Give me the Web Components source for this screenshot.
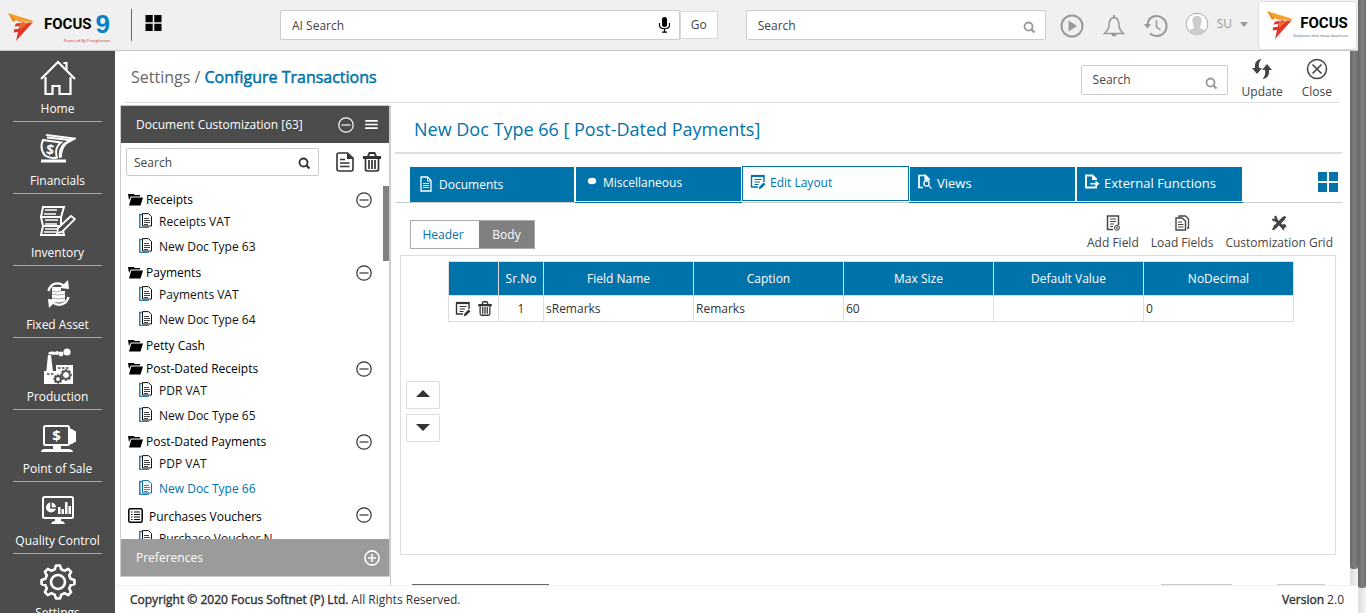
<!DOCTYPE html>
<html lang="en">
<head>
<meta charset="utf-8">
<title>Configure Transactions</title>
<style>
  html, body { margin: 0; height: 100%; overflow: hidden; }
  body { font: 12px/18px "Open Sans", sans-serif; color: #333; background: #fff; --blue: #0073aa; --dark: #4c4c4c; --line: #ccc; }
</style>
</head>
<body>
<app-shell></app-shell>
<script>
const gearPath = (cx, cy, r, R, n) => {
  let d = '';
  for (let i = 0; i < n; i++) {
    const a = i * 2 * Math.PI / n;
    [[-.62, r], [-.3, R], [.3, R], [.62, r]].forEach(([k, q], j) => {
      const t = a + k * Math.PI / n * 1.05;
      d += (i + j ? 'L' : 'M') + (cx + q * Math.sin(t)).toFixed(2) + ' ' + (cy - q * Math.cos(t)).toFixed(2);
    });
  }
  return d + 'Z';
};
const S = 'fill="none" stroke="currentColor"';
const ICONS = {
  home: ['36 36', `<g ${S} stroke-width="2.2"><path d="M1 19 18 2l17 17"/><path d="M25 4V3h2v7M6 17v17h7v-8h7v8h11V17" transform="translate(-.5 0)"/></g>`],
  money: ['36 36', `<g ${S} stroke-width="1.800"><path d="M6 3l29 3.500-9 5c-4 4-5 8-5 14"/><path d="M7 5.500l23 2.500-6 4c-4 4-5 8-4 14"/><path d="M3 8l18 2.500c-5 4-6 9-4 15-4 1-9 0-12-2-5-6-4-11-2-15.500z" stroke-width="2"/></g><path d="M1 29h25" stroke="currentColor" stroke-width="3"/><text x="6" y="22.500" font-size="14" font-weight="700" fill="currentColor" font-family="Open Sans" transform="rotate(8 10 18)">$</text>`],
  inventory: ['36 36', `<g ${S} stroke-width="2"><path d="M3 3h21l-3 10H1zM1 13h20v9H3zM3 22h19l2 9H1z"/><path d="M5 6h12M4 10h12M5 16h13M5 20h12M5 25h14M4 28h12" stroke-width="1.4"/></g><path d="M31 12l4 3-13 13-5 1 1-5z" fill="#4c4c4c" stroke="currentColor" stroke-width="1.8"/>`],
  asset: ['36 36', `<path d="M12 11h9v4h4v10q-6 3-13 0z" fill="currentColor"/><path d="M12 15q4 2 9 0M12 18q6 2 13 0M12 22q6 2 13 0" stroke="#aaa" fill="none"/><g ${S} stroke-width="2.400"><path d="M8.500 15c2-8 11-10 16-4.500M28.500 21c-2 8-11 10-16 5"/></g><path d="M20 12l9 1-1-9zM17 24l-9-1 1 9z" fill="currentColor"/>`],
  factory: ['36 36', `<g fill="currentColor"><path d="M8 7h3l2 17 1 12H5z"/><path d="M4 23h12v-6h17v19H4z"/><circle cx="27" cy="4" r="3.6"/><circle cx="21" cy="6" r="2.4"/><circle cx="17" cy="5" r="2"/><path d="M8 6c1-3 5-3 8-1l-1 2z"/></g><g stroke="#4c4c4c" stroke-dasharray="2.5 1.5" stroke-width="1.5"><path d="M18 20h12M7 26h8"/></g><g fill="none" stroke="#4c4c4c" stroke-width="1.5"><path d="${gearPath(26, 27, 3.6, 5, 8)}"/><path d="${gearPath(18, 31, 2.6, 3.8, 8)}"/></g>`],
  pos: ['36 36', `<rect x="4" y="6" width="25" height="19" rx="1.500" ${S} stroke-width="2"/><path d="M29 8l5 2v13l-5 2zM34 11h2.500v11H34zM13 26h8v3h8q4 1 4 3H1q0-3 4-3h8z" fill="currentColor"/><text x="16.500" y="21" text-anchor="middle" font-size="15" font-weight="700" fill="currentColor" font-family="Open Sans">$</text>`],
  quality: ['36 36', `<rect x="3" y="5" width="30" height="21" rx="1.500" ${S} stroke-width="2"/><path d="M15 27h6v2q3 0 4 3H11q1-3 4-3z" fill="currentColor"/><circle cx="11" cy="15.500" r="5" fill="currentColor"/><path d="M11 10v6h6" stroke="#4c4c4c" stroke-width="1.500" fill="none"/><path d="M18 22v-7h2.500v7zM21.500 22v-5H24v5zM25 22V10h2.500v12zM28.500 22v-8H31v8z" fill="currentColor"/>`],
  gear: ['36 36', `<g ${S} stroke-width="2.600" stroke-linejoin="round"><path d="${gearPath(18, 18, 13, 16.6, 8)}"/><circle cx="18" cy="18" r="7"/></g>`],
  grid: ['20 20', `<path d="M0 0h9v9H0zM11 0h9v9h-9zM0 11h9v9H0zM11 11h9v9h-9z" fill="currentColor"/>`],
  mic: ['12 16', `<rect x="4" y="0" width="5" height="10" rx="2.500" fill="currentColor"/><path d="M1.500 6v2c0 5 10 5 10 0V6M6.500 12v3M4 15.200h5" ${S} stroke-width="1.200"/>`],
  search: ['14 14', `<circle cx="6.500" cy="6.500" r="4" ${S} stroke-width="1.800"/><path d="M9.500 9.500l3 3" ${S} stroke-width="2.200"/>`],
  play: ['24 24', `<circle cx="12" cy="12" r="10.500" ${S} stroke-width="2"/><path d="M8.500 6.500l8.500 5.500-8.500 5.500z" fill="currentColor"/>`],
  bell: ['24 24', `<path d="M12 3.500C7 4 7 9 7 12c0 3-2 5-4.500 7.500h19C19 17 17 15 17 12c0-3 0-8-5-8.500z" ${S} stroke-width="1.600"/><path d="M9.500 20a2.500 2.500 0 0 0 5 0zM11 1h2v3h-2z" fill="currentColor"/>`],
  history: ['24 24', `<path d="M5 5.500A10 10 0 1 1 6 19.500" ${S} stroke-width="2"/><path d="M0 10h7l-3.500 4.500z" fill="currentColor"/><path d="M3.500 11Q3.500 8 5.500 5" ${S} stroke-width="2"/><path d="M12.500 6v7l4 3" ${S} stroke-width="1.500"/>`],
  avatar: ['24 24', `<circle cx="12" cy="12" r="10.800" fill="#fff" stroke="#aaa"/><path d="M12 4c4 0 5 3 4.500 6S15 14 15 15.500s5 1.500 5 3.500a10 10 0 0 1-16 0c0-2 5-2 5-3.500S8 13 7.500 10 8 4 12 4z" fill="#ccc"/>`],
  caret: ['10 6', `<path d="M0 0h10L5 6z" fill="currentColor"/>`],
  up: ['14 8', `<path d="M0 7h14L7 0z" fill="currentColor"/>`],
  down: ['14 8', `<path d="M0 1h14L7 8z" fill="currentColor"/>`],
  refresh: ['22 22', `<path d="M10.500 1C5.500 1.500 3.500 5 4 10H1l5 6 5-6H8c-.5-4 0-6.500 2.500-9zM11.500 21c5-.5 7-4 6.500-9h3l-5-6-5 6h3c.5 4 0 6.500-2.500 9z" fill="currentColor"/>`],
  close: ['22 22', `<circle cx="11" cy="11" r="9.500" ${S} stroke-width="1.500"/><path d="M6.500 6.500l9 9M15.500 6.500l-9 9" ${S} stroke-width="1.600"/>`],
  minus: ['16 16', `<circle cx="8" cy="8" r="7.200" ${S} stroke-width="1.200"/><path d="M3.500 8h9" ${S} stroke-width="1.200"/>`],
  plus: ['16 16', `<circle cx="8" cy="8" r="7.100" ${S} stroke-width="1.600"/><path d="M4 8h8M8 4v8" ${S} stroke-width="1.600"/>`],
  menu: ['14 10', `<path d="M0 1h14M0 5h14M0 9h14" ${S} stroke-width="1.800"/>`],
  note: ['18 20', `<path d="M3 1h8.500L17 6v11q0 2-2 2H3q-2 0-2-2V3q0-2 2-2z" ${S} stroke-width="1.600"/><path d="M11 1l6 6h-6z" fill="currentColor"/><path d="M4 7.500h5M4 11h9.500M4 14.500h9.500" ${S} stroke-width="1.500"/>`],
  trash: ['18 20', `<path d="M5 4l1.500-3h5L13 4" ${S} stroke-width="1.800"/><path d="M0 4h18v3H0z" fill="currentColor"/><path d="M2.500 6v11q0 2 2 2h9q2 0 2-2V6M6 8v9M9 8v9M12 8v9" ${S} stroke-width="1.700"/>`],
  folder: ['15 12', `<path d="M0 0h5.500L7 1h5v1.500H2.800L1 6zM3.300 3.500H15L12.500 11.500H1z" fill="currentColor"/>`],
  docs: ['13 15', `<path d="M3 1.500H.8v13h9" fill="none" stroke="#2d7fae" stroke-width="1.500"/><path d="M3.500.6h6l3 3V13h-9z" ${S}/><path d="M5 5.500h5M5 7.500h6M5 9.500h6M5 11.500h4" ${S} stroke-width=".8"/>`],
  list: ['15 15', `<rect x=".8" y=".8" width="13.400" height="13.400" rx="1.500" ${S} stroke-width="1.500"/><path d="M3 4h1.500M3 6.500h1.500M3 9h1.500M3 11.500h1.500M6 4h6M6 6.500h6M6 9h6M6 11.500h6" ${S} stroke-width="1.100"/>`],
  page: ['12 16', `<path d="M1 1h6.500L11 4.500V15H1z" ${S} stroke-width="1.300"/><path d="M7.500 1v4H11M3 7.500h6M3 9.500h6M3 11.500h6" ${S}/>`],
  dot: ['12 16', `<ellipse cx="7" cy="7" rx="4.200" ry="3.300" fill="currentColor"/>`],
  edit: ['16 16', `<path d="M14 8V2H1.500v11H8" ${S} stroke-width="1.400" stroke-linejoin="round"/><path d="M1 2h13.500" ${S} stroke-width="2.200"/><path d="M4.500 5.500h7M4.500 8h5.500M4.500 10.500h4" ${S} stroke-width="1.100"/><path d="M13.500 8.500l2 1.800-4.300 4.200-2.400.8.500-2.600z" fill="currentColor"/>`],
  view: ['16 16', `<path d="M12 6V5L8.500 1.500H2v12h4" ${S} stroke-width="1.700"/><circle cx="9.500" cy="9.500" r="2.600" ${S} stroke-width="1.300"/><path d="M8 1v5h4zM11.200 11.200l3.500 3.500" fill="currentColor" stroke="currentColor" stroke-width="1.200"/>`],
  external: ['16 16', `<path d="M12 6V5L8.500 1.500H2v12h10v-2" ${S} stroke-width="1.900"/><path d="M8 1v5h4z" fill="currentColor"/><path d="M6.500 9h5V6.500l4 3.300-4 3.200v-2.500h-5z" fill="currentColor"/>`],
  addfield: ['16 16', `<path d="M13.500 10V1H2.500v13.500H8" ${S} stroke-width="1.500"/><path d="M5 4h6M5 6.500h6M5 9h4M5 11.500h3" ${S} stroke-width="1.200"/><circle cx="12" cy="12.800" r="2.500" ${S}/><path d="M12 11.300v3M10.500 12.800h3" ${S} stroke-width=".8"/>`],
  loadfields: ['16 16', `<path d="M5 2.500V1h6.500l3 3v9H13" ${S} stroke-width="1.300"/><path d="M2 3h6l3.500 3v9H2z" ${S} stroke-width="1.400"/><path d="M4 7h4M4 9.500h5.500M4 12h5.500" ${S} stroke-width="1.200"/>`],
  tools: ['16 16', `<path d="M4.500 4.500l8.500 9" ${S} stroke-width="3"/><path d="M1 3.500l2 .5.800-1L3 .8C5.500.3 7 2.500 6.200 5L5 6.500C2.500 7 .8 5.500 1 3.500zM10.500 11l2-2q3 0 3 3.500l-2-.5-.8 1 .8 2.200q-3 0-3-4.200z" fill="currentColor"/><path d="M13 3L3.500 12.500" ${S} stroke-width="3.400"/><path d="M13.500.8l1.800 1.800-2.300 2-1.800-1.800zM3.500 10.500l2 2L3 15l-2.300-.3z" fill="currentColor"/>`],
  mark: ['26 28', `<path d="M0 0l26 8-6 2-3-1.500-6 .5-3-2-2 1.500z" fill="#f6a02d"/><path d="M0 0l8 7-3 2z" fill="#e98b20"/><path d="M8 10.500l4-.5 4-1 2 1.500L25 9 8 28l2-9-4.500.5 1-3.500h4l1-3-5 .5z" fill="#e3352b"/><path d="M12 10.500l4-1 3 1.500-7 6z" fill="#f26a2c"/>`],
};

function define(name, html, setup) {
  const tpl = document.createElement('template');
  tpl.innerHTML = '<style>*{box-sizing:border-box}button,input{font:inherit;color:inherit}button{padding:0;border:0;background:none}a{color:inherit;text-decoration:none}</style>' + html;
  customElements.define(name, class extends HTMLElement {
    connectedCallback() {
      if (this.shadowRoot) return;
      this.attachShadow({ mode: 'open' }).append(tpl.content.cloneNode(true));
      if (setup) setup.call(this, this.shadowRoot);
    }
  });
}

define('ui-icon', `<style>:host{display:block;flex:none;width:16px;height:16px}svg{display:block;width:100%;height:100%}</style>`, function (root) {
  const [box, art] = ICONS[this.getAttribute('name')];
  root.innerHTML += `<svg viewBox="0 0 ${box}" aria-hidden="true">${art}</svg>`;
});

define('search-box', `<style>
  :host{display:flex;align-items:center;height:30px;background:#fff;border:1px solid #ccc;border-radius:2px;padding:0 9px 0 var(--inset,11px);box-sizing:border-box;color:#444}
  input{flex:1;min-width:0;border:0;outline:0;padding:0;background:none;height:20px}
  input::placeholder{color:#444;opacity:1}
  ui-icon{width:14px;height:14px;color:var(--glyph,#999);margin-top:var(--drop,3px)}
  ui-icon[name=mic]{width:12px;height:16px;color:#000;margin-top:0}
</style><input type="text">`, function (root) {
  const input = root.querySelector('input');
  input.placeholder = this.getAttribute('label');
  input.setAttribute('aria-label', this.getAttribute('label'));
  input.insertAdjacentHTML('afterend', `<ui-icon name="${this.getAttribute('icon') || 'search'}"></ui-icon>`);
});

define('brand-logo', `<style>
  :host{display:flex;align-items:center;color:#000}
  ui-icon{width:26px;height:28px}
  .words{display:flex;flex-direction:column;align-items:flex-end}
  .name{display:flex;font:700 15px/var(--name-line,22px) "Liberation Sans Narrow","Roboto",sans-serif}
</style><ui-icon name="mark"></ui-icon><div class="words"><div class="name"><slot></slot></div><slot name="tag"></slot></div>`);

define('app-header', `<style>
  :host{display:flex;align-items:center;background:#f0f0f0;border-bottom:1px solid #c8c8c8;box-sizing:border-box;padding-left:8px;color:#999}
  .main{--name-line:29px;gap:10px;width:110px;margin-top:3px}
  .nine{color:#0a80c4;font:700 26px/29px "Liberation Sans",sans-serif;margin-left:4px}
  .tag{font:4px/4px "Open Sans",sans-serif;color:#c33}
  .rule{width:1px;height:32px;background:#666;margin-left:13px}
  .apps{margin-left:13px;color:#000}.apps ui-icon{width:17px;height:16px;margin-bottom:4px}
  .ai{flex:379;margin-left:118px}
  .go{width:38px;height:28px;background:#fff;border:1px solid #d8d8d8;color:#444}
  .find{flex:279;margin-left:28px}
  nav{display:flex;align-items:center;gap:18px;margin:2px 0 0 14px}
  nav ui-icon{width:24px;height:24px}
  .user{display:flex;align-items:center;gap:8px;margin:0 10px 2px 17px}
  .user ui-icon{width:24px;height:24px}.user ui-icon[name=caret]{width:8px;height:5px}
  .co{display:flex;align-items:center;justify-content:center;width:99px;height:49px;background:#fff;border:1px solid #ddd;border-radius:4px;margin-right:1px}
  .co .tag{color:#555}
</style>
<brand-logo class="main">FOCUS<span class="nine">9</span><span class="tag" slot="tag">Powered By Prangharam</span></brand-logo>
<div class="rule"></div>
<button class="apps" aria-label="Apps"><ui-icon name="grid"></ui-icon></button>
<search-box class="ai" label="AI Search" icon="mic"></search-box>
<button class="go">Go</button>
<search-box class="find" label="Search"></search-box>
<nav><button aria-label="Play"><ui-icon name="play"></ui-icon></button><button aria-label="Notifications"><ui-icon name="bell"></ui-icon></button><button aria-label="History"><ui-icon name="history"></ui-icon></button></nav>
<button class="user"><ui-icon name="avatar"></ui-icon><span>SU</span><ui-icon name="caret"></ui-icon></button>
<div class="co"><brand-logo>FOCUS<span class="tag" slot="tag">Solutions that move business</span></brand-logo></div>`);

define('nav-item', `<style>
  :host{display:block;flex:none;height:72px;color:#fff}
  a{display:flex;flex-direction:column;align-items:center;height:71px;padding-top:9px;margin:0 13px;border-bottom:1px solid #aaa;white-space:nowrap}
  ui-icon{width:36px;height:36px;margin-bottom:4px}
</style><a href="#"><slot></slot></a>`, function (root) {
  root.querySelector('a').insertAdjacentHTML('afterbegin', `<ui-icon name="${this.getAttribute('icon')}"></ui-icon>`);
});

define('side-nav', `<style>:host{display:flex;flex-direction:column;background:var(--dark);overflow:hidden}</style>
<nav-item icon="home">Home</nav-item><nav-item icon="money">Financials</nav-item><nav-item icon="inventory">Inventory</nav-item><nav-item icon="asset">Fixed Asset</nav-item><nav-item icon="factory">Production</nav-item><nav-item icon="pos">Point of Sale</nav-item><nav-item icon="quality">Quality Control</nav-item><nav-item icon="gear">Settings</nav-item>`);

define('tool-button', `<style>
  :host{display:block;color:#444}
  button{display:flex;flex-direction:column;align-items:center;gap:3px;white-space:nowrap}
  .i{width:var(--tool-size,16px);height:var(--tool-size,16px)}
</style><button><slot></slot></button>`, function (root) {
  root.querySelector('button').insertAdjacentHTML('afterbegin', `<ui-icon class="i" name="${this.getAttribute('icon')}"></ui-icon>`);
});

define('page-title', `<style>
  :host{display:flex;align-items:center;height:52px;margin:0 10px;padding:0 8px 0 6px;border-bottom:1px solid #ddd;box-sizing:border-box}
  h1{flex:1;margin:0;font-size:16px;line-height:24px;font-weight:400;color:#666}
  b{font-weight:400;color:var(--blue);-webkit-text-stroke:.5px var(--blue)}
  search-box{width:147px;margin:6px 14px 0 0;--drop:6px}
  tool-button{--tool-size:22px;margin-top:6px}
  tool-button+tool-button{margin-left:19px}
</style><h1>Settings / <b>Configure Transactions</b></h1><search-box label="Search"></search-box>
<tool-button icon="refresh">Update</tool-button><tool-button icon="close">Close</tool-button>`);

define('doc-group', `<style>
  :host{display:block;color:#000}
  .head{display:flex;align-items:center;height:23px;padding:0 17px 0 7px;gap:3px}
  .head span{flex:1}
  .head ui-icon{width:15px;height:12px}.head ui-icon[name=list]{width:15px;height:15px}
  :host([icon=list]) .head{gap:6px;height:25px;padding-bottom:1px}:host([icon=list]) span{padding-top:3px}
  .head button ui-icon{width:16px;height:16px;color:#333}
</style><div class="head"><span></span></div><slot></slot>`, function (root) {
  const head = root.querySelector('.head');
  head.firstChild.textContent = this.getAttribute('label');
  head.insertAdjacentHTML('afterbegin', `<ui-icon name="${this.getAttribute('icon') || 'folder'}"></ui-icon>`);
  if (this.children.length) head.insertAdjacentHTML('beforeend', '<button aria-label="Collapse"><ui-icon name="minus"></ui-icon></button>');
});

define('doc-item', `<style>
  :host{display:block;height:25px;padding-left:18px;color:#111}
  :host([current]){color:var(--blue)}
  a{display:flex;gap:7px;padding-top:2px}
  ui-icon{width:13px;height:15px}
</style><a href="#"><ui-icon name="docs"></ui-icon><span><slot></slot></span></a>`);

define('doc-panel', `<style>
  :host{display:flex;flex-direction:column;width:270px;flex:none;border:1px solid #ccc;box-sizing:border-box;margin:2px 0 8px 5px}
  header,footer{display:flex;align-items:center;flex:none;height:37px;padding:0 9px 0 15px;background:var(--dark);color:#fff}
  header span,footer span{flex:1}
  header ui-icon[name=menu]{width:13px;height:9px;margin:0 2px 0 11px}
  footer{background:#9b9b9b}
  .bar{display:flex;align-items:center;padding:5px 8px 9px 5px}
  search-box{width:193px;height:28px;margin-right:17px;--glyph:#333;--drop:1px;--inset:7px;padding-right:7px}
  .bar ui-icon{width:18px;height:20px;color:#333}
  .bar button+button{margin-left:9px}
  .tree{flex:1;min-height:0;overflow:hidden;position:relative;padding-top:3px}
  .thumb{position:absolute;right:0;top:1px;width:6px;height:75px;background:#808080}
</style>
<header><span>Document Customization [63]</span><button aria-label="Collapse all"><ui-icon name="minus"></ui-icon></button><button aria-label="Menu"><ui-icon name="menu"></ui-icon></button></header>
<div class="bar"><search-box label="Search"></search-box><button aria-label="New"><ui-icon name="note"></ui-icon></button><button aria-label="Delete"><ui-icon name="trash"></ui-icon></button></div>
<div class="tree">
<doc-group label="Receipts"><doc-item>Receipts VAT</doc-item><doc-item>New Doc Type 63</doc-item></doc-group>
<doc-group label="Payments"><doc-item>Payments VAT</doc-item><doc-item>New Doc Type 64</doc-item></doc-group>
<doc-group label="Petty Cash"></doc-group>
<doc-group label="Post-Dated Receipts"><doc-item>PDR VAT</doc-item><doc-item>New Doc Type 65</doc-item></doc-group>
<doc-group label="Post-Dated Payments"><doc-item>PDP VAT</doc-item><doc-item current>New Doc Type 66</doc-item></doc-group>
<doc-group label="Purchases Vouchers" icon="list"><doc-item>Purchase Voucher N</doc-item></doc-group>
<div class="thumb"></div></div>
<footer><span>Preferences</span><button aria-label="Expand"><ui-icon name="plus"></ui-icon></button></footer>`);

define('editor-tab', `<style>
  :host{display:block;flex:0 1 167px;height:37px;padding:1px 1px 0;box-sizing:border-box}
  a{display:flex;align-items:center;height:34px;padding:0 8px 2px 7px;gap:4px;background:var(--blue);color:#fff;white-space:nowrap}
  ui-icon{width:16px;height:16px;margin-bottom:2px}
  :host([large]){font-size:13px}
  :host([underline]){border-bottom:1px solid var(--blue)}
  :host([first]){flex-basis:165px;padding-left:0}
  :host([first]) a{height:35px;padding:0 8px;gap:5px}
  :host([current]){padding:0}
  :host([current]) a{height:35px;background:#fff;color:var(--blue);border:1px solid var(--blue)}
</style><a href="#"><slot></slot></a>`, function (root) {
  root.querySelector('a').insertAdjacentHTML('afterbegin', `<ui-icon name="${this.getAttribute('icon')}"></ui-icon>`);
});

define('field-table', `<style>
  :host{display:block}
  table{border-collapse:collapse;table-layout:fixed;width:100%;color:#333}
  th,td{border:1px solid #ddd;padding:0 2px;text-align:left;font-weight:400}
  th{height:34px;background:var(--blue);color:#fff;text-align:center}
  td{height:26px}
  .n{text-align:center}
  .acts{display:flex;justify-content:center;gap:7px;color:#333}
  ui-icon[name=trash]{width:14px;height:15px}
</style><table><colgroup><col style="width:50px"><col style="width:45px"><col><col><col><col><col></colgroup>
<thead><tr><th></th><th>Sr.No</th><th>Field Name</th><th>Caption</th><th>Max Size</th><th>Default Value</th><th>NoDecimal</th></tr></thead>
<tbody><tr><td><div class="acts"><button aria-label="Edit"><ui-icon name="edit"></ui-icon></button><button aria-label="Delete"><ui-icon name="trash"></ui-icon></button></div></td><td class="n">1</td><td>sRemarks</td><td>Remarks</td><td>60</td><td></td><td>0</td></tr></tbody></table>`);

define('layout-editor', `<style>
  :host{display:flex;flex-direction:column;flex:1;min-width:0;overflow:hidden;border-left:1px solid #ccc;margin-top:2px;padding:0 8px 0 4px}
  h2{flex:none;margin:0;height:49px;padding:11px 0 0 19px;border-bottom:2px solid #ddd;font-size:18px;line-height:26px;font-weight:400;color:var(--blue)}
  .tabs{display:flex;align-items:flex-start;flex:none;height:49px;padding:12px 4px 0 15px;border-bottom:1px solid #ccc}
  .tabs button{margin:6px 0 0 auto;color:var(--blue)}
  .tabs button ui-icon{width:20px;height:20px}
  .tools{display:flex;flex:none;align-items:flex-start;height:52px;padding:12px 9px 0 15px;gap:12px}
  .switch{display:flex;margin:5px auto 0 0;border:1px solid #aaa;height:29px}
  .switch button{width:68px;padding-right:4px;color:var(--blue);background:#fff}
  .switch button+button{width:55px;padding:0;background:#808080;color:#fff}
  .sheet{display:flex;flex:none;align-items:flex-start;height:300px;margin:0 6px 0 5px;border:1px solid #ddd;box-sizing:border-box;padding:5px 41px 0 5px}
  .move{display:flex;flex-direction:column;gap:5px;margin:120px 8px 0 0}
  .move button{display:flex;align-items:center;justify-content:center;width:34px;height:28px;border:1px solid #ddd;border-radius:1px;color:#333;padding-bottom:2px}
  .move ui-icon{width:14px;height:8px}
  field-table{flex:1}
  .more{display:flex;flex:none;padding:29px 17px 0 17px;gap:45px}
  .more i{height:20px;border-top:1px solid #ccc;width:71px}
  .more i:first-child{width:137px;border-color:#666;margin-right:auto}
  .more i:last-child{width:48px}
</style>
<h2>New Doc Type 66 [ Post-Dated Payments]</h2>
<div class="tabs"><editor-tab icon="page" first>Documents</editor-tab><editor-tab icon="dot" underline>Miscellaneous</editor-tab><editor-tab icon="edit" current>Edit Layout</editor-tab><editor-tab icon="view" large underline>Views</editor-tab><editor-tab icon="external" large underline>External Functions</editor-tab><button aria-label="Tiles"><ui-icon name="grid"></ui-icon></button></div>
<div class="tools"><div class="switch"><button>Header</button><button>Body</button></div><tool-button icon="addfield">Add Field</tool-button><tool-button icon="loadfields">Load Fields</tool-button><tool-button icon="tools">Customization Grid</tool-button></div>
<div class="sheet"><div class="move"><button aria-label="Move up"><ui-icon name="up"></ui-icon></button><button aria-label="Move down"><ui-icon name="down"></ui-icon></button></div><field-table></field-table></div>
<div class="more"><i></i><i></i><i></i></div>`);

define('scroll-rail', `<style>
  :host{display:flex;background:linear-gradient(90deg,#ddd,#f2f2f2)}
  div{width:100%;height:var(--thumb);background:linear-gradient(90deg,#6a6a6a,#808080 60%,#6a6a6a);border-radius:0 0 3px 3px}
</style><div></div>`);

define('app-footer', `<style>
  :host{display:flex;align-items:center;justify-content:space-between;border-top:1px solid #eee;box-sizing:border-box;padding:0 14px 0 15px;background:#fff}
  b{font-weight:400;-webkit-text-stroke:.4px #333}
</style><span><b>Copyright © 2020 Focus Softnet (P) Ltd.</b> All Rights Reserved.</span><span><b>Version</b> 2.0</span>`);

define('app-shell', `<style>
  :host{display:grid;height:100vh;grid-template:51px minmax(0,1fr) 28px / 115px minmax(0,1fr) 8px 8px}
  app-header{grid-area:1/1/2/4}
  .outer{grid-area:1/4/4/5;--thumb:96%}
  side-nav{grid-area:2/1/4/2}
  main{grid-area:2/2/3/3;display:flex;flex-direction:column;min-height:0}
  .work{display:flex;flex:1;min-height:0}
  .inner{grid-area:2/3/3/4;--thumb:97%}
  app-footer{grid-area:3/2/4/4}
</style>
<app-header></app-header><side-nav></side-nav>
<main><page-title></page-title><div class="work"><doc-panel></doc-panel><layout-editor></layout-editor></div></main>
<scroll-rail class="inner"></scroll-rail><scroll-rail class="outer"></scroll-rail><app-footer></app-footer>`);
</script>
</body>
</html>
